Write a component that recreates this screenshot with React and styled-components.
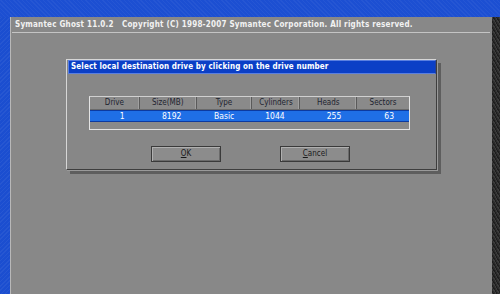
import styled, { createGlobalStyle } from "styled-components";

const GlobalStyle = createGlobalStyle`
  html, body {
    margin: 0;
    padding: 0;
    background: #1c4fd2;
  }
  #root {
    width: 500px;
    height: 294px;
  }
`;

const columns = [
  { key: "drive", label: "Drive", width: 50, align: "right" },
  { key: "size", label: "Size(MB)", width: 57, align: "right" },
  { key: "type", label: "Type", width: 56, align: "center" },
  { key: "cyl", label: "Cylinders", width: 48, align: "right" },
  { key: "heads", label: "Heads", width: 57, align: "right" },
  { key: "sectors", label: "Sectors", width: 53, align: "right" },
];

const drives = [
  { drive: "1", size: "8192", type: "Basic", cyl: "1044", heads: "255", sectors: "63" },
];

export default function App() {
  return (
    <>
      <GlobalStyle />
      <Screen>
        <TopBlue />
        <LeftBlue />
        <Panel>
          <Header>
            Symantec Ghost 11.0.2&nbsp;&nbsp; Copyright (C) 1998-2007 Symantec
            Corporation. All rights reserved.
          </Header>
          <Workspace>
            <Dialog>
              <DialogTitle>
                Select local destination drive by clicking on the drive number
              </DialogTitle>
              <DialogBody>
                <Table>
                  <HeadRow>
                    {columns.map((c) => (
                      <HeadCell key={c.key} $w={c.width}>
                        {c.label}
                      </HeadCell>
                    ))}
                  </HeadRow>
                  {drives.map((d) => (
                    <DataRow key={d.drive} $selected>
                      {columns.map((c) => (
                        <DataCell key={c.key} $w={c.width} $align={c.align}>
                          {d[c.key]}
                        </DataCell>
                      ))}
                    </DataRow>
                  ))}
                </Table>
                <Buttons>
                  <Button>
                    <u>O</u>K
                  </Button>
                  <Button>
                    <u>C</u>ancel
                  </Button>
                </Buttons>
              </DialogBody>
            </Dialog>
          </Workspace>
        </Panel>
        <DarkStrip />
      </Screen>
    </>
  );
}

const Screen = styled.div`
  width: 500px;
  height: 294px;
  display: grid;
  grid-template-columns: 10px 482px 8px;
  grid-template-rows: 17px 277px;
  background: #1c4fd2;
  overflow: hidden;
`;

const TopBlue = styled.div`
  grid-column: 1 / 4;
  grid-row: 1;
  background: repeating-linear-gradient(
      45deg,
      rgba(255, 255, 255, 0.04) 0 1px,
      transparent 1px 3px
    ),
    #1c4fd2;
`;

const LeftBlue = styled.div`
  grid-column: 1;
  grid-row: 2;
  background: repeating-linear-gradient(
      -45deg,
      rgba(255, 255, 255, 0.05) 0 1px,
      transparent 1px 3px
    ),
    #1b4ed0;
`;

const DarkStrip = styled.div`
  grid-column: 3;
  grid-row: 2;
  background: repeating-linear-gradient(
      60deg,
      #3c3c3c 0 1px,
      #1e1e1e 1px 2px,
      #2c2c2c 2px 3px
    );
`;

const Panel = styled.div`
  grid-column: 2;
  grid-row: 2;
  background: #888888;
  border-left: 1px solid #b8b8b8;
  display: flex;
  flex-direction: column;
`;

const Header = styled.div`
  height: 13px;
  padding: 2px 0 0 3px;
  border-bottom: 1px solid #c4c4c4;
  margin: 0 2px 0 1px;
  color: #f2f2f2;
  font-family: "DejaVu Sans Condensed", "DejaVu Sans", sans-serif;
  font-weight: bold;
  font-size: 8px;
  line-height: 11px;
  letter-spacing: 0.22px;
  white-space: nowrap;
`;

const Workspace = styled.div`
  padding: 26px 0 0 55px;
`;

const Dialog = styled.div`
  width: 369px;
  height: 109px;
  background: #878787;
  border-top: 1px solid #d6d6d6;
  border-left: 1px solid #d6d6d6;
  border-right: 1px solid #3e3e3e;
  border-bottom: 1px solid #3e3e3e;
  box-shadow: 1px 1px 0 #9a9a9a, 4px 4px 0 #5e5e5e;
  display: flex;
  flex-direction: column;
`;

const DialogTitle = styled.div`
  height: 12px;
  margin: 0 0 0 1px;
  padding-left: 2px;
  background: #0b3fc6;
  border: 1px solid #5a7fe0;
  border-right-color: #2040a0;
  color: #ffffff;
  font-family: "DejaVu Sans Condensed", "DejaVu Sans", sans-serif;
  font-weight: bold;
  font-size: 8px;
  line-height: 12px;
  letter-spacing: 0.12px;
  white-space: nowrap;
`;

const DialogBody = styled.div`
  padding: 22px 0 0 22px;
  display: flex;
  flex-direction: column;
`;

const Table = styled.div`
  width: 319px;
  height: 32px;
  border: 1px solid #e4e4e4;
  border-top-color: #d0d0d0;
  background: #8a8a8a;
  display: flex;
  flex-direction: column;
`;

const HeadRow = styled.div`
  display: flex;
  height: 12px;
  border-bottom: 1px solid #6a6a6a;
`;

const HeadCell = styled.div`
  width: ${(p) => p.$w}px;
  text-align: center;
  color: #1e2430;
  font-family: "DejaVu Sans Condensed", "DejaVu Sans", sans-serif;
  font-size: 8px;
  line-height: 12px;
  border-right: 1px solid #5a5a5a;
  box-shadow: inset -1px 0 0 #a0a0a0;
  &:last-child {
    border-right: none;
    box-shadow: none;
  }
`;

const DataRow = styled.div`
  display: flex;
  height: 10px;
  background: ${(p) => (p.$selected ? "#1f6fe6" : "transparent")};
  border-top: 1px solid ${(p) => (p.$selected ? "#0c3aa0" : "transparent")};
  border-bottom: 1px solid ${(p) => (p.$selected ? "#0c3aa0" : "transparent")};
`;

const DataCell = styled.div`
  width: ${(p) => p.$w}px;
  text-align: ${(p) => p.$align};
  padding: 0 ${(p) => (p.$align === "right" ? 15 : 0)}px 0 0;
  box-sizing: border-box;
  color: #ffffff;
  font-family: "DejaVu Sans Condensed", "DejaVu Sans", sans-serif;
  font-size: 8.5px;
  line-height: 10px;
`;

const Buttons = styled.div`
  display: flex;
  gap: 59px;
  padding: 16px 0 0 62px;
`;

const Button = styled.div`
  width: 68px;
  height: 14px;
  border: 1px solid #3a3a3a;
  box-shadow: inset 1px 1px 0 #b0b0b0, inset -1px -1px 0 #6a6a6a;
  background: #8c8c8c;
  text-align: center;
  color: #1a1a1a;
  font-family: "DejaVu Sans Condensed", "DejaVu Sans", sans-serif;
  font-size: 8px;
  line-height: 14px;
  u {
    text-decoration-thickness: 1px;
  }
`;
